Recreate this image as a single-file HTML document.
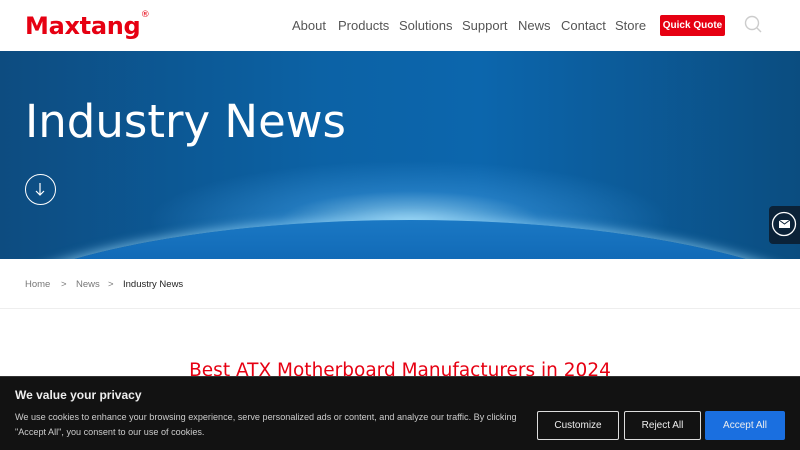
<!DOCTYPE html>
<html><head><meta charset="utf-8"><style>
*{margin:0;padding:0;box-sizing:border-box}
body{width:800px;height:450px;overflow:hidden;background:#fff;font-family:"Liberation Sans",sans-serif;position:relative}
.hdr{position:absolute;top:0;left:0;width:800px;height:51px;background:#fff}
.logo{position:absolute;left:25px;top:12px;font-family:"DejaVu Sans",sans-serif;font-weight:bold;font-size:24px;color:#e60012;letter-spacing:-0.3px;white-space:nowrap}
.logo sup{font-size:9px;font-weight:normal;position:absolute;top:-2px;right:-9px}
.nav{position:absolute;top:18px;font-family:"Liberation Sans",sans-serif;font-size:13px;color:#555;white-space:nowrap}
.qq{position:absolute;left:660px;top:15px;width:65px;height:21px;background:#e60012;color:#fff;border-radius:2px;font-family:"Liberation Sans",sans-serif;font-size:10px;font-weight:bold;text-align:center;line-height:21px;white-space:nowrap}
.hero{position:absolute;top:51px;left:0;width:800px;height:208px;overflow:hidden;
background:radial-gradient(ellipse 260px 60px at 410px 170px,rgba(170,225,250,.85),rgba(60,150,220,.45) 50%,rgba(0,0,0,0) 100%),linear-gradient(90deg,#0d4c80 0%,#0c62a5 40%,#0c66ad 60%,#0b4d80 100%)}
.earth{position:absolute;left:-60px;top:169px;width:940px;height:260px;border-radius:50%;background:linear-gradient(#1a78c4,#0f66b3 20%);box-shadow:0 -3px 10px rgba(150,215,250,.6)}
.hero h1{position:absolute;left:25px;top:44px;font-family:"DejaVu Sans",sans-serif;font-weight:normal;font-size:45px;color:#fff;white-space:nowrap}
.circ{position:absolute;left:25px;top:123px;width:31px;height:31px;border:1.5px solid #fff;border-radius:50%}
.mail{position:absolute;left:769px;top:206px;width:31px;height:38px;background:#0b2238;border-radius:4px 0 0 4px}
.bc{position:absolute;top:279px;font-size:9.5px;color:#777;white-space:nowrap}
.line{position:absolute;top:308px;left:0;width:800px;height:1px;background:#eee}
.t2{position:absolute;top:360px;left:0;width:800px;text-align:center;font-family:"DejaVu Sans",sans-serif;font-size:18.5px;color:#e60012}
.ck{position:absolute;left:0;top:376px;width:800px;height:74px;background:#121212;border-top:1px solid #333}
.ck h3{position:absolute;left:15px;top:11px;font-size:12px;color:#eee;font-weight:bold}
.ck p{position:absolute;left:15px;top:33px;width:520px;font-size:9.1px;line-height:15px;color:#ccc}
.b{position:absolute;top:34px;height:29px;font-size:10px;color:#eee;text-align:center;line-height:27px;border:1px solid #ddd;border-radius:2px}
</style></head><body>
<div class="hdr">
<div class="logo">Maxtang<sup>®</sup></div>
<span class="nav" style="left:292px">About</span>
<span class="nav" style="left:338px">Products</span>
<span class="nav" style="left:399px">Solutions</span>
<span class="nav" style="left:462px">Support</span>
<span class="nav" style="left:518px">News</span>
<span class="nav" style="left:561px">Contact</span>
<span class="nav" style="left:615px">Store</span>
<div class="qq">Quick Quote</div>
<svg style="position:absolute;left:744px;top:15px" width="20" height="20"><circle cx="8" cy="8" r="6.5" fill="none" stroke="#ccc" stroke-width="1.4"/><line x1="13" y1="13" x2="17" y2="17" stroke="#ccc" stroke-width="1.4"/></svg>
</div>
<div class="hero">
<div class="earth"></div>
<h1>Industry News</h1>
<div class="circ"><svg width="28" height="28"><path d="M14 8v12M10 16l4 4 4-4" fill="none" stroke="#fff" stroke-width="1.2"/></svg></div>
</div>
<div class="mail"><svg width="31" height="38"><circle cx="15" cy="18" r="11.5" fill="none" stroke="#fff" stroke-width="1.3"/><rect x="10" y="14" width="11" height="8" fill="#fff"/><path d="M10 14l5.5 4 5.5-4" fill="none" stroke="#0b2238" stroke-width="1"/></svg></div>
<span class="bc" style="left:25px">Home</span>
<span class="bc" style="left:61px">&gt;</span>
<span class="bc" style="left:76px">News</span>
<span class="bc" style="left:108px">&gt;</span>
<span class="bc" style="left:123px;color:#222">Industry News</span>
<div class="line"></div>
<div class="t2">Best ATX Motherboard Manufacturers in 2024</div>
<div class="ck">
<h3>We value your privacy</h3>
<p>We use cookies to enhance your browsing experience, serve personalized ads or content, and analyze our traffic. By clicking<br>"Accept All", you consent to our use of cookies.</p>
<div class="b" style="left:537px;width:82px">Customize</div>
<div class="b" style="left:624px;width:77px">Reject All</div>
<div class="b" style="left:705px;width:80px;background:#1a6fe0;border-color:#1a6fe0">Accept All</div>
</div>
</body></html>
